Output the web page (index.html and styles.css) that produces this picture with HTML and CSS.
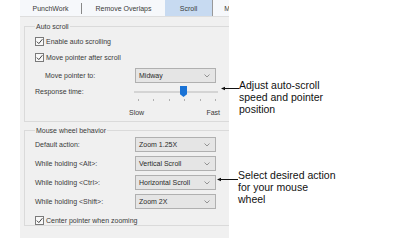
FILE: index.html
```html
<!DOCTYPE html>
<html lang="en">
<head>
    <meta charset="UTF-8">
    <title>Options - Scroll</title>
    <link rel="stylesheet" href="styles.css">
</head>
<body>

    <div class="page">
        <div class="dialog">
            <div class="tabs">
                <div class="tab tab-punch">PunchWork</div>
                <div class="tab tab-overlaps">Remove Overlaps</div>
                <div class="tab tab-scroll active">Scroll</div>
                <div class="tab tab-more">M</div>
            </div>

            <div class="panel">
                <fieldset class="group group-auto">
                    <legend>Auto scroll</legend>

                    <div class="check-row first">
                        <span class="check"><svg width="9" height="9" viewBox="0 0 9 9"><path d="M1.8 4.6 L3.8 6.6 L7.4 2.2" fill="none" stroke="#444" stroke-width="1"/></svg></span>
                        Enable auto scrolling
                    </div>
                    <div class="check-row">
                        <span class="check"><svg width="9" height="9" viewBox="0 0 9 9"><path d="M1.8 4.6 L3.8 6.6 L7.4 2.2" fill="none" stroke="#444" stroke-width="1"/></svg></span>
                        Move pointer after scroll
                    </div>

                    <div class="field-row indent">
                        <span class="field-label">Move pointer to:</span>
                        <div class="dropdown">Midway<svg class="chev" width="6" height="4" viewBox="0 0 6 4"><path d="M0.5 0.5 L3 3 L5.5 0.5" fill="none" stroke="#888" stroke-width="0.9"/></svg></div>
                    </div>

                    <div class="slider-row">
                        <span class="field-label">Response time:</span>
                        <div class="slider">
                            <div class="track"></div>
                            <div class="thumb"></div>
                        </div>
                    </div>
                    <div class="ticks">
                        <i></i><i></i><i></i><i></i><i></i><i></i>
                    </div>
                    <div class="scale">
                        <span>Slow</span>
                        <span>Fast</span>
                    </div>
                </fieldset>

                <fieldset class="group group-wheel">
                    <legend>Mouse wheel behavior</legend>

                    <div class="field-row first">
                        <span class="field-label">Default action:</span>
                        <div class="dropdown">Zoom 1.25X<svg class="chev" width="6" height="4" viewBox="0 0 6 4"><path d="M0.5 0.5 L3 3 L5.5 0.5" fill="none" stroke="#888" stroke-width="0.9"/></svg></div>
                    </div>
                    <div class="field-row">
                        <span class="field-label">While holding &lt;Alt&gt;:</span>
                        <div class="dropdown">Vertical Scroll<svg class="chev" width="6" height="4" viewBox="0 0 6 4"><path d="M0.5 0.5 L3 3 L5.5 0.5" fill="none" stroke="#888" stroke-width="0.9"/></svg></div>
                    </div>
                    <div class="field-row">
                        <span class="field-label">While holding &lt;Ctrl&gt;:</span>
                        <div class="dropdown">Horizontal Scroll<svg class="chev" width="6" height="4" viewBox="0 0 6 4"><path d="M0.5 0.5 L3 3 L5.5 0.5" fill="none" stroke="#888" stroke-width="0.9"/></svg></div>
                    </div>
                    <div class="field-row">
                        <span class="field-label">While holding &lt;Shift&gt;:</span>
                        <div class="dropdown">Zoom 2X<svg class="chev" width="6" height="4" viewBox="0 0 6 4"><path d="M0.5 0.5 L3 3 L5.5 0.5" fill="none" stroke="#888" stroke-width="0.9"/></svg></div>
                    </div>

                    <div class="check-row last">
                        <span class="check"><svg width="9" height="9" viewBox="0 0 9 9"><path d="M1.8 4.6 L3.8 6.6 L7.4 2.2" fill="none" stroke="#444" stroke-width="1"/></svg></span>
                        Center pointer when zooming
                    </div>
                </fieldset>
            </div>
        </div>

        <!-- callouts -->
        <div class="callout callout-scroll">
            <svg class="arrow" width="18" height="5" viewBox="0 0 18 5"><path d="M0 2.5 L4 0.8 L4 4.2 Z" fill="#111"/><path d="M3 2.5 H18" stroke="#111" stroke-width="1"/></svg>
            <p>Adjust auto-scroll<br>speed and pointer<br>position</p>
        </div>
        <div class="callout callout-wheel">
            <svg class="arrow" width="21" height="5" viewBox="0 0 21 5"><path d="M0 2.5 L4 0.8 L4 4.2 Z" fill="#111"/><path d="M3 2.5 H21" stroke="#111" stroke-width="1"/></svg>
            <p>Select desired action<br>for your mouse<br>wheel</p>
        </div>
    </div>

</body>
</html>
```

FILE: styles.css
```css
/* Halaman dasar */
body {
    margin: 0;
    background: #ffffff;
    font-family: "Liberation Sans", Arial, sans-serif;
    color: #3a3a3a;
}

.page {
    position: relative;
    width: 406px;
    height: 250px;
    padding-left: 20px;
    box-sizing: border-box;
}

/* Jendela dialog */
.dialog {
    width: 209px;
    height: 238px;
    background: #f0f0f0;
    overflow: hidden;
    font-size: 7px;
}

/* Baris tab */
.tabs {
    display: flex;
    height: 16px;
    background: #f6f8fb;
    border-bottom: 1px solid #dedede;
}

.tab {
    display: flex;
    align-items: center;
    justify-content: center;
    flex: none;
    height: 16px;
    color: #3a3a3a;
}

.tab-punch {
    width: 61px;
    border-right: 1px solid #888;
    height: 11px;
    margin-top: 3px;
}

.tab-overlaps {
    width: 83px;
}

.tab-scroll {
    width: 47px;
}

.tab.active {
    background: #c7daf1;
    border-right: 1px solid #999;
}

.tab-more {
    width: 17px;
    justify-content: flex-end;
}

/* Isi panel */
.panel {
    padding: 5px 0 0 4px;
}

.group {
    margin: 0 -4px 0 0;
    padding: 0 0 0 10px;
    border: 1px solid #dadada;
    border-right: none;
    min-width: 0;
}

.group legend {
    padding: 0 1px;
    line-height: 9px;
}

.group-auto {
    height: 98px;
}

.group-wheel {
    margin-top: 4px;
    height: 98px;
}

/* Checkbox */
.check-row {
    display: flex;
    align-items: center;
    gap: 2px;
    height: 12px;
    margin-top: 4px;
}

.check-row.last {
    margin-top: 5px;
}

.check {
    display: block;
    width: 9px;
    height: 9px;
    box-sizing: border-box;
    border: 1px solid #7a7a7a;
    background: #f8f8f8;
}

.check svg {
    display: block;
    margin: -1px 0 0 -1px;
}

/* Label + dropdown */
.field-row {
    display: flex;
    align-items: center;
    height: 15px;
    margin-top: 4px;
}

.field-row.indent {
    margin-top: 5px;
    padding-left: 10px;
}

.group-wheel .field-row.first {
    margin-top: 2px;
}

.field-label {
    flex: none;
    width: 100px;
}

.indent .field-label {
    width: 90px;
}

.dropdown {
    display: flex;
    align-items: center;
    justify-content: space-between;
    width: 81px;
    height: 15px;
    box-sizing: border-box;
    padding: 0 5px 0 3px;
    background: #e5e5e5;
    border: 1px solid #b0b0b0;
    color: #2a2a2a;
}

.chev {
    display: block;
}

/* Slider waktu respon */
.slider-row {
    display: flex;
    align-items: center;
    height: 14px;
    margin-top: 1px;
}

.slider-row .field-label {
    width: 99px;
}

.slider {
    position: relative;
    width: 84px;
    height: 14px;
}

.track {
    position: absolute;
    left: 0;
    right: 0;
    top: 7px;
    height: 2px;
    background: #e6e6e6;
    border: 1px solid #d4d4d4;
    box-sizing: border-box;
}

.thumb {
    position: absolute;
    left: 46px;
    top: 2px;
    width: 7px;
    height: 11px;
    background: #1a73d6;
    clip-path: polygon(0 0, 100% 0, 100% 75%, 50% 100%, 0 75%);
}

.ticks {
    display: flex;
    justify-content: space-between;
    width: 78px;
    margin: 1px 0 0 103px;
    height: 3px;
}

.ticks i {
    display: block;
    width: 1px;
    height: 2px;
    background: #b0b0b0;
}

.scale {
    display: flex;
    justify-content: space-between;
    width: 91px;
    margin: 6px 0 0 94px;
    line-height: 9px;
}

/* Keterangan di kanan */
.callout {
    position: absolute;
    display: flex;
    align-items: flex-start;
    font-size: 10.5px;
    line-height: 12px;
    color: #111;
}

.callout p {
    margin: 0;
}

.callout .arrow {
    flex: none;
    margin-top: 7px;
}

.callout-scroll {
    left: 221px;
    top: 79px;
}

.callout-wheel {
    left: 217px;
    top: 169px;
}

.callout-wheel .arrow {
    margin-top: 8px;
}
```
